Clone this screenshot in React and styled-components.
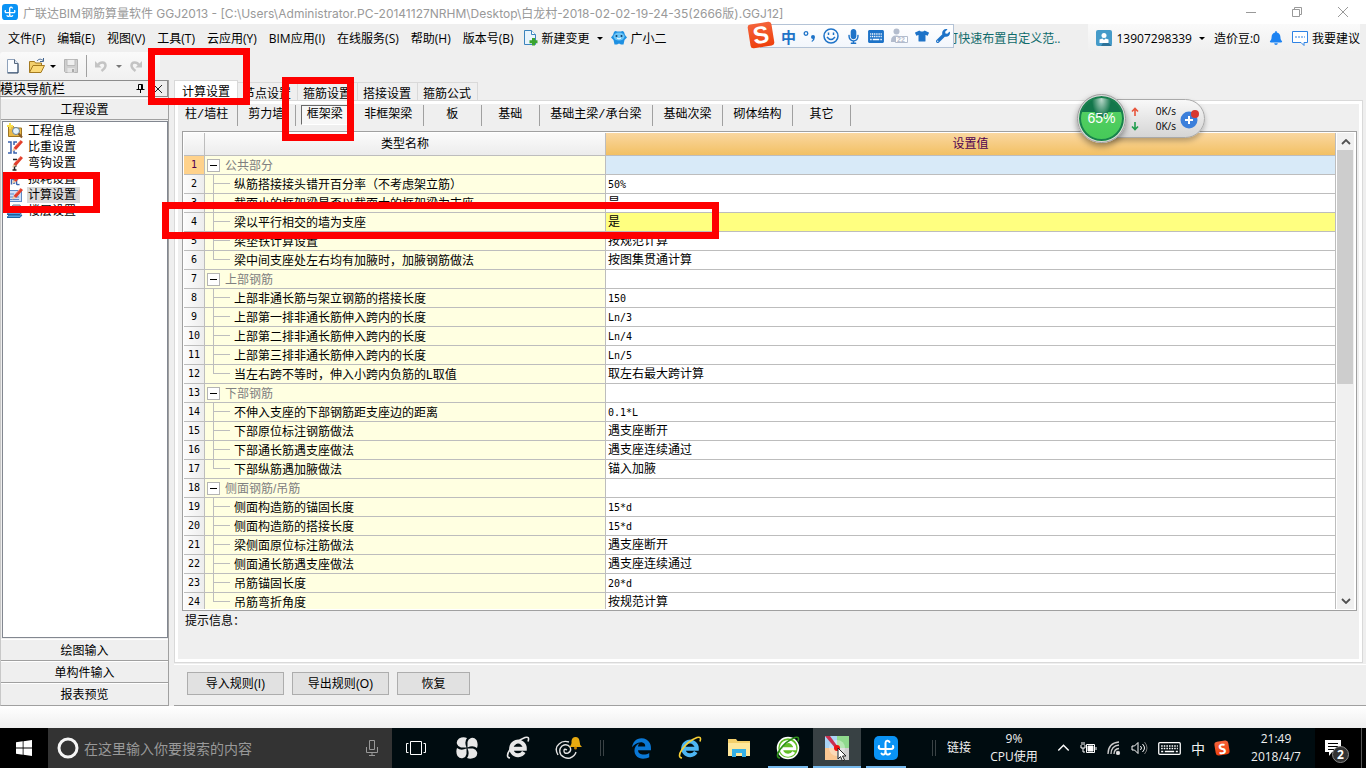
import React, { useState } from 'react';
import styled, { createGlobalStyle, css } from 'styled-components';
import {
    FaBell,
    FaEdgeLegacy,
    FaMicrophone,
    FaTshirt,
    FaWrench,
} from 'react-icons/fa';

const GlobalStyle = createGlobalStyle`
    * {
        box-sizing: border-box;
    }

    body {
        margin: 0;
        font-family: 'Liberation Sans', 'Noto Sans CJK SC', sans-serif;
        font-size: 12px;
        color: #000;
        background: #fff;
    }

    button {
        font: inherit;
        color: inherit;
        padding: 0;
        border: none;
        background: none;
        white-space: nowrap;
    }

    svg {
        display: block;
        flex: none;
    }
`;

const Desktop = styled.div`
    position: relative;
    display: flex;
    flex-direction: column;
    height: 100vh;
    overflow: hidden;
    background: #efefef;
`;

// Title bar
const TitleBar = styled.header`
    display: flex;
    align-items: center;
    height: 24px;
    padding-left: 2px;
    background: #fff;
    color: #999;
    font-family: Inter, 'Noto Sans CJK SC', sans-serif;
`;

const Title = styled.h1`
    flex: 1;
    margin: 0 0 0 5px;
    font-size: 12px;
    font-weight: normal;
    white-space: nowrap;
`;

const WindowButton = styled.button`
    display: flex;
    align-items: center;
    justify-content: center;
    width: 46px;
    height: 20px;
`;

// Menu bar
const MenuBar = styled.nav`
    display: flex;
    align-items: center;
    height: 28px;
    padding: 0 6px 0 8px;
    font-family: 'Open Sans', 'Noto Sans CJK SC', sans-serif;
`;

const MenuItems = styled.div`
    display: flex;
    align-items: center;
    gap: ${props => props.$gap}px;
    margin-right: 9px;
`;

const MenuItem = styled.button`
    display: flex;
    align-items: center;
    gap: 4px;
`;

const Caret = styled.span`
    width: 0;
    height: 0;
    margin-left: ${props => props.$gap || 0}px;
    border: 3px solid transparent;
    border-top-color: ${props => props.$color || '#000'};
    border-bottom: none;
`;

const Notice = styled.a`
    margin-left: auto;
    margin-right: 28px;
    color: #0f6b6b;
    text-decoration: none;
    white-space: nowrap;
`;

const AccountArea = styled.div`
    display: flex;
    align-items: center;
    gap: 9px;
    height: 28px;
    padding-left: 8px;
    background: linear-gradient(#fafafa, #efefef);
`;

// Toolbar
const Toolbar = styled.div`
    display: flex;
    align-items: center;
    width: 160px;
    height: 28px;
    padding-left: 5px;
    border-radius: 3px;
    background: linear-gradient(#fafafa, #f0f0f0);
`;

const ToolButton = styled.button`
    display: flex;
    align-items: center;
    margin-right: 7px;
`;

const ToolDivider = styled.span`
    width: 1px;
    height: 22px;
    margin-right: 7px;
    background: #a0a0a0;
`;

// Left navigation
const Body = styled.div`
    display: flex;
    flex: 1;
    min-height: 0;
`;

const Sidebar = styled.aside`
    display: flex;
    flex-direction: column;
    width: 169px;
    margin-right: 5px;
    border: 1px solid #a0a0a0;
    border-top: none;
    border-left-color: #c8c8c8;
`;

const SidebarHead = styled.div`
    display: flex;
    align-items: center;
    height: 17px;
    margin: 0 0 1px -1px;
    border: 1px solid #8c8c8c;
    border-left: none;
    font-size: 13px;
    line-height: 14px;

    span {
        flex: 1;
    }
`;

const HeadButton = styled.button`
    display: flex;
    align-items: center;
    justify-content: center;
    width: 18px;
    height: 15px;
`;

const SectionButton = styled.button`
    height: 22px;
    padding-bottom: 2px;
    border-top: 1px solid #fff;
    border-bottom: 1px solid #a0a0a0;
    text-align: center;

    &:last-child {
        border-bottom: none;
    }
`;

const NavList = styled.ul`
    flex: 1;
    min-height: 0;
    margin: 1px 0 1px 1px;
    padding: 1px 4px;
    border: 1px solid #828790;
    background: #fff;
    list-style: none;
`;

const NavItem = styled.li`
    height: 16px;

    button {
        display: flex;
        align-items: center;
        gap: 4px;
        height: 16px;
    }

    span {
        padding: 0 4px 0 1px;
        line-height: 16px;
        background: ${props => (props.$active ? '#d9d9d9' : 'transparent')};
    }
`;

// Settings area
const Main = styled.main`
    display: flex;
    flex: 1;
    flex-direction: column;
    min-width: 0;
`;

const TabStrip = styled.div`
    display: flex;
    align-items: flex-end;
    height: 20px;
`;

const Tab = styled.button`
    height: 18px;
    padding: 1px 6px 0 5px;
    border: 1px solid #d9d9d9;
    border-bottom: none;
    border-left-width: ${props => (props.$active ? '1px' : '0')};

    ${props => props.$active && css`
        height: 20px;
        padding: 0 7px;
        background: #fff;
    `}
`;

const TabPage = styled.section`
    display: flex;
    flex: 1;
    flex-direction: column;
    min-height: 0;
    margin-right: 3px;
    padding: 1px 2px 0 7px;
    border: 1px solid #d9d9d9;
    box-shadow: inset 0 0 0 3px #fff;
`;

const SubTabs = styled.div`
    display: flex;
    align-items: center;
    height: 29px;
    margin-left: -3px;
    padding-bottom: 3px;
    font-family: 'Liberation Mono', 'Noto Sans CJK SC', monospace;
`;

const SubTab = styled.button`
    min-width: 58px;
    height: 21px;
    padding: 0 11px 0 10px;
    border-right: 1px solid #a0a0a0;

    &:first-child {
        padding: 0 9px 0 6px;
    }

    span {
        display: inline-block;
        line-height: 18px;
    }

    ${props => props.$active && css`
        padding: 0 5px;

        span {
            width: 47px;
            border: 1px solid #fff;
            border-top-color: #696969;
            border-left-color: #696969;
            background: #f7f7f7;
        }
    `}
`;

const GridFrame = styled.div`
    display: flex;
    flex: 1;
    min-height: 0;
    margin-right: 3px;
    padding: 1px;
    border: 1px solid #a0a0a0;
    background: #fff;
`;

const GridView = styled.div`
    flex: 1;
    min-width: 0;
    overflow: hidden;
`;

const Grid = styled.table`
    width: 100%;
    table-layout: fixed;
    border-collapse: separate;
    border-spacing: 0;
    line-height: 18px;

    th,
    td {
        padding: 0;
        border-right: 1px solid #bdbdbd;
        border-bottom: 1px solid #bdbdbd;
        font-weight: normal;
        white-space: nowrap;
    }

    thead th {
        height: 23px;
        background: linear-gradient(#fbfbfb, #ececec);
    }

    thead th:last-child {
        background: linear-gradient(#fad7a0, #f2c063);
        color: #500050;
    }
`;

const latinFont = css`
    font-family: 'DejaVu Sans Mono', monospace;
    font-size: 10px;
`;

const RowNumber = styled.th`
    ${latinFont}
    height: 19px;
    background: ${props => (props.$active ? '#ffd28b' : 'linear-gradient(90deg, #fcfcfc, #ededed)')};
    color: ${props => (props.$active ? '#500050' : '#000')};
`;

const NameCell = styled.td`
    background: #ffffe1;

    div {
        display: flex;
        height: 18px;
        line-height: 20px;
        color: ${props => (props.$group ? '#808080' : '#000')};
    }
`;

const Toggle = styled.button`
    display: flex;
    align-items: center;
    justify-content: center;
    align-self: center;
    width: 13px;
    height: 13px;
    margin: 0 5px 0 2px;
    border: 1px solid #b4b4b4;
    background: #fff;

    &::before {
        content: '';
        width: 7px;
        height: 1px;
        background: #000;
    }
`;

const Branch = styled.span`
    width: 17px;
    height: 9px;
    margin: 0 4px 0 8px;
    border-left: 1px solid #bdbdbd;
    border-bottom: 1px solid #bdbdbd;

    ${props => !props.$last && css`
        height: 18px;
        border-bottom: none;
        background: linear-gradient(#bdbdbd, #bdbdbd) 0 8px / 100% 1px no-repeat;
    `}
`;

const ValueCell = styled.td`
    && {
        padding: 1px 0 0 2px;
    }
    ${props => props.$latin && latinFont}
    line-height: 17px;
    vertical-align: top;
    background: ${props => props.$fill || '#fff'};
`;

const ScrollBar = styled.div`
    display: flex;
    flex-direction: column;
    width: 17px;
    margin: 0 1px;
    background: #f0f0f0;
`;

const ScrollButton = styled.button`
    display: flex;
    align-items: center;
    justify-content: center;
    height: 17px;
`;

const ScrollTrack = styled.div`
    flex: 1;

    &::before {
        content: '';
        display: block;
        height: 53%;
        margin-right: 1px;
        background: #cdcdcd;
    }
`;

const Hint = styled.p`
    height: 51px;
    margin: 0;
    padding: 1px 3px;
    line-height: 18px;
`;

const Actions = styled.div`
    display: flex;
    align-items: center;
    gap: 8px;
    height: 42px;
    margin-top: 1px;
    padding: 0 13px 4px;
    border-top: 1px solid #fff;
    border-bottom: 1px solid #a0a0a0;
`;

const ActionButton = styled.button`
    width: ${props => (props.$wide ? 97 : 73)}px;
    height: 23px;
    padding-bottom: 2px;
    border: 1px solid #adadad;
    background: #e1e1e1;
`;

const BottomGap = styled.div`
    height: 22px;
    background: linear-gradient(#fff, #efefef);
`;

// Floating things over the window
const Mark = styled.div`
    position: absolute;
    left: ${props => props.$x}px;
    top: ${props => props.$y}px;
    width: ${props => props.$w}px;
    height: ${props => props.$h}px;
    border: 7px solid #fe0000;
    pointer-events: none;
`;

const ImeBar = styled.div`
    position: absolute;
    top: 24px;
    left: 760px;
    display: flex;
    align-items: center;
    gap: 7px;
    width: 194px;
    height: 24px;
    padding-left: 20px;
    border: 1px solid #b4c3d6;
    background: linear-gradient(#fff, #f2f6fc);
    color: #1e73c8;

    b {
        font-size: 15px;
    }
`;

const SogouMark = styled.span`
    display: flex;
    align-items: center;
    justify-content: center;
    width: ${props => props.$size}px;
    height: ${props => props.$size}px;
    border-radius: 3px;
    background: linear-gradient(#f4633a, #ee3f0c);
    color: #fff;
    font-size: ${props => props.$size}px;
    font-weight: bold;
    rotate: -9deg;
`;

const ImeLogo = styled.div`
    position: absolute;
    top: 23px;
    left: 749px;
`;

const SpeedBall = styled.div`
    position: absolute;
    top: 93px;
    right: 161px;
    display: flex;
    align-items: center;
    width: 128px;
    height: 50px;
`;

const Ball = styled.div`
    display: flex;
    z-index: 1;
    align-items: center;
    justify-content: center;
    width: 49px;
    height: 49px;
    border: 2px solid #dcdcdc;
    border-radius: 50%;
    outline: 1px solid #9c9c9c;
    outline-offset: -1px;
    background: radial-gradient(ellipse at 50% 8%, #b9d8ca 0, #13764b 30%, transparent 31%),
        linear-gradient(#13764b 35%, #52cf62 36%, #45c958);
    box-shadow: inset 0 0 0 2px #19804e, 0 3px 6px rgba(0, 0, 0, 0.4);
    color: #fff;
    font-size: 14px;
`;

const SpeedPanel = styled.div`
    display: flex;
    flex: 1;
    align-items: center;
    height: 39px;
    margin-left: -20px;
    padding: 2px 4px 0 24px;
    border: 1px solid #a9a9a9;
    border-radius: 0 20px 20px 0;
    background: linear-gradient(#f8f8f8, #d5d5d5);
    box-shadow: 0 3px 5px rgba(0, 0, 0, 0.25);
    font-family: 'Open Sans', sans-serif;
    font-size: 10px;
    line-height: 15px;
    text-align: right;

    span {
        flex: 1;
        margin-right: 4px;
    }
`;

const SpeedArrows = styled.div`
    display: flex;
    flex-direction: column;
    gap: 6px;
`;

// Taskbar
const Taskbar = styled.footer`
    display: flex;
    align-items: center;
    height: 40px;
    background: #000c10;
    color: #f0f0f0;
    font-family: 'Open Sans', 'Noto Sans CJK SC', sans-serif;
`;

const StartButton = styled.button`
    display: flex;
    align-items: center;
    justify-content: center;
    width: 48px;
    height: 40px;
    background: #000;
`;

const Search = styled.label`
    display: flex;
    align-items: center;
    width: 344px;
    height: 40px;
    padding: 0 13px 0 8px;
    background: #333;

    input {
        flex: 1;
        min-width: 0;
        padding: 0 0 0 4px;
        border: none;
        outline: none;
        background: none;
        color: #fff;
        font: inherit;
        font-size: 14px;
    }

    input::placeholder {
        color: #999;
        opacity: 1;
    }
`;

const TaskGroup = styled.div`
    display: flex;
    gap: ${props => props.$gap}px;
`;

const TaskButton = styled.button`
    display: flex;
    align-items: center;
    justify-content: center;
    width: 48px;
    height: 40px;

    ${props => props.$open && css`
        background: linear-gradient(#76b9ed, #76b9ed) 50% 100% / 40px 2px no-repeat;
    `}

    ${props => props.$active && css`
        background: linear-gradient(#76b9ed, #76b9ed) 0 100% / 100% 2px no-repeat #384144;
    `}
`;

const Grip = styled.span`
    width: 4px;
    height: 16px;
    margin: 0 ${props => props.$after}px 0 ${props => props.$before}px;
    border: 1px solid #3a4245;
    border-width: 0 1px;
`;

const Tray = styled.div`
    display: flex;
    align-items: center;
    margin-left: auto;
    height: 40px;
`;

const TrayText = styled.div`
    width: ${props => props.$width}px;
    line-height: 18px;
    text-align: center;
    white-space: nowrap;
`;

const TrayIcons = styled.div`
    display: flex;
    align-items: center;
    gap: 10px;
    margin: 0 11px 0 3px;

    b {
        font-size: 14px;
        font-weight: normal;
    }
`;

const Notification = styled.button`
    position: relative;
    display: flex;
    align-items: flex-start;
    width: 46px;
    height: 40px;
    margin-left: 3px;
    padding: 12px 0 0 10px;
    background: #000;

    span {
        position: absolute;
        top: 18px;
        left: 17px;
        width: 17px;
        height: 17px;
        border: 1px solid #888;
        border-radius: 50%;
        background: #333;
        color: #fff;
        font-weight: bold;
        line-height: 15px;
    }
`;

const ShowDesktop = styled.button`
    width: 5px;
    height: 40px;
    border-left: 1px solid #555;
    background: #000;
`;

const menus = ['文件(F)', '编辑(E)', '视图(V)', '工具(T)', '云应用(Y)', 'BIM应用(I)', '在线服务(S)', '帮助(H)', '版本号(B)'];

const navItems = ['工程信息', '比重设置', '弯钩设置', '损耗设置', '计算设置', '楼层设置'];

const tabs = ['计算设置', '节点设置', '箍筋设置', '搭接设置', '箍筋公式'];

const subTabs = ['柱/墙柱', '剪力墙', '框架梁', '非框架梁', '板', '基础', '基础主梁/承台梁', '基础次梁', '砌体结构', '其它'];

const groups = [
    {
        name: '公共部分',
        items: [
            ['纵筋搭接接头错开百分率（不考虑架立筋）', '50%'],
            ['截面小的框架梁是否以截面大的框架梁为支座', '是'],
            ['梁以平行相交的墙为支座', '是', '#ffff80'],
            ['梁垫铁计算设置', '按规范计算'],
            ['梁中间支座处左右均有加腋时，加腋钢筋做法', '按图集贯通计算'],
        ],
    },
    {
        name: '上部钢筋',
        items: [
            ['上部非通长筋与架立钢筋的搭接长度', '150'],
            ['上部第一排非通长筋伸入跨内的长度', 'Ln/3'],
            ['上部第二排非通长筋伸入跨内的长度', 'Ln/4'],
            ['上部第三排非通长筋伸入跨内的长度', 'Ln/5'],
            ['当左右跨不等时，伸入小跨内负筋的L取值', '取左右最大跨计算'],
        ],
    },
    {
        name: '下部钢筋',
        items: [
            ['不伸入支座的下部钢筋距支座边的距离', '0.1*L'],
            ['下部原位标注钢筋做法', '遇支座断开'],
            ['下部通长筋遇支座做法', '遇支座连续通过'],
            ['下部纵筋遇加腋做法', '锚入加腋'],
        ],
    },
    {
        name: '侧面钢筋/吊筋',
        items: [
            ['侧面构造筋的锚固长度', '15*d'],
            ['侧面构造筋的搭接长度', '15*d'],
            ['梁侧面原位标注筋做法', '遇支座断开'],
            ['侧面通长筋遇支座做法', '遇支座连续通过'],
            ['吊筋锚固长度', '20*d'],
            ['吊筋弯折角度', '按规范计算'],
        ],
    },
];

// Flatten the groups so each grid row carries its running number
const rows = groups.flatMap(group => [
    { name: group.name, value: '', group: true },
    ...group.items.map(([name, value, fill], i) => ({
        name,
        value,
        fill,
        last: i === group.items.length - 1,
    })),
]);

const AppLogo = ({ size }) => (
    <svg width={size} height={size} viewBox="0 0 24 24">
        <rect width="24" height="24" rx="5" fill="#0a93f5" />
        <g fill="none" stroke="#fff" strokeWidth="2" strokeLinecap="round">
            <path d="M15.500 6c-1-1.800-4-1.600-4 1v9c0 2.500-2.500 3.500-4 1.500" />
            <path d="M5 10c-.8 1.600 0 3 2 3h10c2 0 2.800-1.400 2-3M11.500 16c0 2.500 3 3.500 4.500 1.500" />
        </g>
    </svg>
);

const NewDocIcon = () => (
    <svg width="16" height="18" viewBox="0 0 16 18">
        <path d="M2.500 2.500h7l3.500 4v9H2.500z" fill="#fbfdff" stroke="#8fa2bb" />
        <path d="M13 6.500v9.500H2.500" fill="none" stroke="#2f4763" />
        <path d="M9.500 2.500v4H13" fill="#dbe7f5" stroke="#55677e" />
    </svg>
);

const OpenIcon = () => (
    <svg width="18" height="18" viewBox="0 0 18 18">
        <path d="M1.500 15.500v-11h5l1 1.500h6v3" fill="#f3cf6c" stroke="#a47a20" />
        <path d="M1.500 15.500L5 8.500h11.500l-3.500 7z" fill="#fbd977" stroke="#a47a20" />
        <path d="M9 4c1.500-2 4-2.500 6-.5M15.500 1v3.500H12" fill="none" stroke="#43658f" />
    </svg>
);

const SaveIcon = () => (
    <svg width="16" height="16" viewBox="0 0 16 16">
        <path d="M1.500 1.500h13v13h-12l-1-1z" fill="#cfcfcf" stroke="#b3b3b3" />
        <path d="M4 1.500h8v6H4z" fill="#efefef" stroke="#bbb" />
        <path d="M4.500 10h7v4.500h-7z" fill="#e6e6e6" />
        <path d="M9 11h2v3H9z" fill="#aaa" />
    </svg>
);

const UndoIcon = ({ flip }) => (
    <svg width="14" height="14" viewBox="0 0 14 14">
        <g transform={flip ? 'translate(14 0) scale(-1 1)' : undefined}>
            <path d="M4 6c2-3.500 7.500-3.500 7.500.5 0 2.500-2 4-4 5.500" fill="none" stroke="#c4c4c4" strokeWidth="2.500" />
            <path d="M1 2v6.500h6.500z" fill="#c4c4c4" />
        </g>
    </svg>
);

const pencil = (
    <>
        <path d="M6.500 9l7-8L16 3 9 11z" fill="#e23e2c" />
        <path d="M9 6.500l4.500-5" stroke="#f7a08f" />
        <path d="M6.500 9l-1.500 3.500L9 11z" fill="#f1c9a0" />
    </>
);

const NavIcon = ({ index }) => (
    <svg width="16" height="16" viewBox="0 0 16 16">
        {index === 0 && (
            <>
                <path d="M1.500 13.500v-10h5l1 1.500h7v8.500z" fill="#eab948" stroke="#9c7424" />
                <circle cx="9" cy="8" r="3.500" fill="#e5f3fb" stroke="#66829a" />
                <path d="M11.500 10.500l3.500 4" stroke="#875a28" strokeWidth="2" />
                <path d="M3 0v6M0 3h6" stroke="#f9e04e" strokeWidth="2" />
            </>
        )}
        {index === 1 && (
            <>
                <path d="M1 3h3v11H1M10 3H7v3M7 11v3h3" fill="none" stroke="#3a62ad" strokeWidth="1.500" />
                {pencil}
            </>
        )}
        {index === 2 && (
            <>
                <path d="M6 4.500h4M7.500 9v6M5.500 15h4M6 11h3.500" stroke="#222" strokeWidth="1.500" />
                {pencil}
            </>
        )}
        {index === 3 && (
            <>
                <path d="M4.500 13.500V8H7v5M9.500 7v5.500q0 1.500 3 1" fill="none" stroke="#3a62ad" strokeWidth="1.500" />
                {pencil}
            </>
        )}
        {index === 4 && (
            <>
                <rect x=".5" y="3.500" width="14" height="11" fill="#cfe0f7" stroke="#5e8ac6" />
                <path d="M2 7h5M2 10h10M2 12.500h10" stroke="#5e8ac6" />
                {pencil}
            </>
        )}
        {index === 5 && (
            <>
                <path d="M3 6l3-4h7l2 4z" fill="#b9c9d6" stroke="#6f8798" />
                <path d="M2 6h13l-2 3H0zM2 9h13l-2 2.500H0zM2 12h13l-2 2.500H0z" fill="#56a5e4" stroke="#1e639f" />
            </>
        )}
    </svg>
);

const ChevronIcon = ({ down, color = '#505050', width = 10, stroke = 1.8 }) => (
    <svg width={width} height={width * 0.6} viewBox="0 0 10 6">
        <path d={down ? 'M1 1l4 4 4-4' : 'M1 5l4-4 4 4'} fill="none" stroke={color} strokeWidth={stroke} />
    </svg>
);

const PersonIcon = () => (
    <svg width="16" height="16" viewBox="0 0 16 16">
        <rect width="16" height="16" rx="2" fill="#459bc9" />
        <path d="M9 10l7 6H5z" fill="#2e7399" />
        <circle cx="8" cy="5.500" r="2.500" fill="#fff" />
        <path d="M3.500 9.500l3-1 1.500 1.500 1.500-1.500 3 1V13h-9z" fill="#fff" />
    </svg>
);

const CommentIcon = () => (
    <svg width="16" height="16" viewBox="0 0 16 16">
        <path d="M.5 1.500h15v11H12v3l-3-3H.5z" fill="#fff" stroke="#2f83e4" />
        <path d="M3 7h10" stroke="#2f83e4" strokeDasharray="2 1" />
    </svg>
);

const ChangeIcon = () => (
    <svg width="15" height="16" viewBox="0 0 15 16">
        <path d="M1.500.5h7l4 4v10h-11z" fill="#e9f4fd" stroke="#3c84bd" />
        <path d="M8.500.5v4h4" fill="#fff" stroke="#3c84bd" />
        <path d="M10.500 8v7.500M6.500 11.700h8" stroke="#3aa52e" strokeWidth="3" />
    </svg>
);

const MascotIcon = () => (
    <svg width="16" height="16" viewBox="0 0 16 16">
        <path d="M3 2q1.500-1.500 3-.5h4q1.500-1 3 .5l1 3 2 2.500L13.500 10l-1 4.500H10L8 13.500l-2 1H3.500l-1-4.500L0 7.500 2 5z" fill="#1e90e2" />
        <ellipse cx="8" cy="6.500" rx="5.500" ry="4" fill="#6bc5f7" />
        <circle cx="5.500" cy="6" r="1" fill="#153d66" />
        <circle cx="10.500" cy="6" r="1" fill="#153d66" />
        <path d="M6 8q2 2 4 0" fill="none" stroke="#fff" />
    </svg>
);

const SmileIcon = () => (
    <svg width="16" height="16" viewBox="0 0 16 16" fill="none" stroke="#1e73c8" strokeWidth="1.500">
        <circle cx="8" cy="8" r="7" />
        <path d="M5.500 4.500V7M10.500 4.500V7M4 9q4 5 8 0" />
    </svg>
);

const PunctuationIcon = () => (
    <svg width="13" height="14" viewBox="0 0 13 14">
        <circle cx="3" cy="4.500" r="1.800" fill="none" stroke="#1e73c8" strokeWidth="1.300" />
        <path d="M8 8a2 2 0 1 1 4 0q0 3-3 5l-.5-1Q10 11 10 10 8 10 8 8z" fill="#1e73c8" />
    </svg>
);

const KeyboardIcon = ({ color, width, keys }) => (
    <svg width={width} height="13" viewBox="0 0 22 13" preserveAspectRatio="none">
        <rect x=".7" y=".7" width="20.600" height="11.600" rx="1" fill={keys ? color : 'none'} stroke={color} strokeWidth="1.200" />
        <g stroke={keys || color} strokeWidth="1.300">
            <path d="M3 4h16M3 6.500h16" strokeDasharray="1.500 1" />
            <path d="M3 9.500h2M6.500 9.500h9M17 9.500h2" />
        </g>
    </svg>
);

const UserCardIcon = () => (
    <svg width="17" height="16" viewBox="0 0 17 16" fill="#b3bccd">
        <circle cx="5.500" cy="3.500" r="3" />
        <path d="M0 13q0-6 6-5.500l4 1V14H0z" />
        <path d="M4.500 8.500h12v6h-12z" fill="#fff" stroke="#b3bccd" />
        <text x="6" y="14" fontSize="7" fontWeight="bold">22</text>
    </svg>
);

const WindowsIcon = () => (
    <svg width="16" height="16" viewBox="0 0 16 16" fill="#fff">
        <path d="M0 2.200L6.700 1.300v6.200H0zM7.500 1.200L16 0v7.500H7.500zM0 8.400h6.700v6.300L0 13.800zM7.500 8.400H16V16l-8.500-1.200z" />
    </svg>
);

const TaskViewIcon = () => (
    <svg width="20" height="16" viewBox="0 0 20 16" fill="none" stroke="#fff">
        <path d="M4.500 1.500h11v13h-11zM2.500 3.500h-2v9h2M17.500 3.500h2v9h-2" />
    </svg>
);

const PetalIcon = () => (
    <svg width="22" height="22" viewBox="0 0 22 22" fill="#e8e8e8">
        {[0, 90, 180, 270].map(turn => (
            <g key={turn} transform={`rotate(${turn} 11 11)`}>
                <path d="M10.500 10.500Q8 5 11 1q-4-1.500-8 .5Q0 4 1 7q1 3 4 3.500z" />
            </g>
        ))}
    </svg>
);

const SpiralIcon = () => (
    <svg width="28" height="24" viewBox="0 0 28 24">
        <g fill="none" stroke="#e4e4e4" strokeWidth="1.400">
            <path d="M12 14q-3-2-3 1t4 2q4-2 2-6-3-4-8-1-4 4-1 9 4 4 9 3 5-2 6-6" />
            <path d="M3 19Q-1 12 4 8 8 4 14 6" />
        </g>
        <path d="M14 11q3-2 2.500-6 .5-4 4-4t4 4q0 4 2.500 6z" fill="#e7aa10" />
        <circle cx="20.500" cy="12" r="1.500" fill="#c98300" />
    </svg>
);

const BrowserIcon = ({ color, ring, swoosh }) => (
    <svg width="26" height="26" viewBox="0 0 26 26">
        {ring && <circle cx="13" cy="13" r="10.500" fill="#62be27" stroke="#fff" strokeWidth="1.500" />}
        <path
            d="M8 13.800h11.800A6.800 6.800 0 1 0 18.800 17"
            fill="none"
            stroke={color}
            strokeWidth={ring ? 3 : 4}
        />
        <path d="M5 23Q0 22 5 14.500 11 6 20 2.500q5-1.500 3 4" fill="none" stroke={swoosh} strokeWidth="1.600" />
    </svg>
);

const FolderIcon = () => (
    <svg width="22" height="20" viewBox="0 0 22 20">
        <path d="M0 1h8l1.500 2H22v15H0z" fill="#f4cf6b" />
        <path d="M0 5h22v13H0z" fill="#ffe79b" />
        <path d="M4 11h14v8h-4v-4H8v4H4z" fill="#35b0e6" />
    </svg>
);

const MapIcon = () => (
    <svg width="26" height="26" viewBox="0 0 26 26">
        <path d="M1 1h12v12H1z" fill="#a9d3f5" />
        <path d="M13 1h12v12H13z" fill="#8fd98d" />
        <path d="M1 13h12v12H1z" fill="#fbc792" />
        <path d="M13 13h12v12H13z" fill="#cfcfcf" />
        <circle cx="13" cy="13" r="8" fill="#fff" opacity=".35" />
        <path d="M1 1h5l8 11-2 2z" fill="#c9304f" />
        <circle cx="13" cy="13" r="3" fill="#ee1111" />
        <path d="M14 13v11l2.500-2.500 2 4.500 2-1-2-4H22z" fill="#fff" stroke="#222" />
    </svg>
);

const Arrow = ({ color, down }) => (
    <svg width="8" height="9" viewBox="0 0 8 9">
        <path d={down ? 'M4 0v7M1 4.500l3 3 3-3' : 'M4 9V2M1 4.500l3-3 3 3'} fill="none" stroke={color} strokeWidth="1.600" />
    </svg>
);

const App = () => {
    const [nav, setNav] = useState('计算设置');
    const [tab, setTab] = useState('计算设置');
    const [subTab, setSubTab] = useState('框架梁');

    return (
        <Desktop>
            <GlobalStyle />
            <TitleBar>
                <AppLogo size={16} />
                <Title>{'广联达BIM钢筋算量软件 GGJ2013 - [C:\\Users\\Administrator.PC-20141127NRHM\\Desktop\\白龙村-2018-02-02-19-24-35(2666版).GGJ12]'}</Title>
                <WindowButton aria-label="最小化">
                    <svg width="10" height="10"><path d="M0 5.500h10" stroke="#999" /></svg>
                </WindowButton>
                <WindowButton aria-label="还原">
                    <svg width="10" height="10" fill="none" stroke="#999"><path d="M.5 2.500h7v7h-7zM2.500 2.500v-2h7v7h-2" /></svg>
                </WindowButton>
                <WindowButton aria-label="关闭">
                    <svg width="10" height="10"><path d="M0 0l10 10M10 0L0 10" stroke="#999" /></svg>
                </WindowButton>
            </TitleBar>

            <MenuBar>
                <MenuItems $gap={12}>
                    {menus.map(menu => <MenuItem key={menu}>{menu}</MenuItem>)}
                </MenuItems>
                <MenuItems $gap={8}>
                    <MenuItem>
                        <ChangeIcon />
                        新建变更
                        <Caret $gap={3} />
                    </MenuItem>
                    <MenuItem><MascotIcon />广小二</MenuItem>
                </MenuItems>
                <Notice href="#">可快速布置自定义范..</Notice>
                <AccountArea>
                    <MenuItem>
                        <PersonIcon />
                        13907298339
                        <Caret $gap={3} />
                    </MenuItem>
                    <MenuItem>造价豆:0</MenuItem>
                    <MenuItem aria-label="消息"><FaBell size={14} color="#1d83f2" /></MenuItem>
                    <MenuItem><CommentIcon />我要建议</MenuItem>
                </AccountArea>
            </MenuBar>

            <Toolbar>
                <ToolButton aria-label="新建"><NewDocIcon /></ToolButton>
                <ToolButton aria-label="打开">
                    <OpenIcon />
                    <Caret $gap={4} />
                </ToolButton>
                <ToolButton aria-label="保存"><SaveIcon /></ToolButton>
                <ToolDivider />
                <ToolButton aria-label="撤销">
                    <UndoIcon />
                    <Caret $gap={8} $color="#777" />
                </ToolButton>
                <ToolButton aria-label="恢复操作"><UndoIcon flip /></ToolButton>
            </Toolbar>

            <Body>
                <Sidebar>
                    <SidebarHead>
                        <span>模块导航栏</span>
                        <HeadButton aria-label="固定">
                            <svg width="9" height="9" stroke="#000" fill="none"><path d="M2.500 5V.5h4V5M5.500 1v4M.5 5.500h8M4.500 6v3" /></svg>
                        </HeadButton>
                        <HeadButton aria-label="关闭导航栏">
                            <svg width="8" height="8" stroke="#222"><path d="M0 0l8 8M8 0L0 8" /></svg>
                        </HeadButton>
                    </SidebarHead>
                    <SectionButton>工程设置</SectionButton>
                    <NavList>
                        {navItems.map((item, i) => (
                            <NavItem key={item} $active={item === nav}>
                                <button onClick={() => setNav(item)}>
                                    <NavIcon index={i} />
                                    <span>{item}</span>
                                </button>
                            </NavItem>
                        ))}
                    </NavList>
                    <SectionButton>绘图输入</SectionButton>
                    <SectionButton>单构件输入</SectionButton>
                    <SectionButton>报表预览</SectionButton>
                </Sidebar>

                <Main>
                    <TabStrip>
                        {tabs.map(item => (
                            <Tab key={item} $active={item === tab} onClick={() => setTab(item)}>{item}</Tab>
                        ))}
                    </TabStrip>
                    <TabPage>
                        <SubTabs>
                            {subTabs.map(item => (
                                <SubTab key={item} $active={item === subTab} onClick={() => setSubTab(item)}>
                                    <span>{item}</span>
                                </SubTab>
                            ))}
                        </SubTabs>
                        <GridFrame>
                            <GridView>
                                <Grid>
                                    <colgroup>
                                        <col width="21" />
                                        <col width="401" />
                                        <col />
                                    </colgroup>
                                    <thead>
                                        <tr>
                                            <th aria-label="序号" />
                                            <th>类型名称</th>
                                            <th>设置值</th>
                                        </tr>
                                    </thead>
                                    <tbody>
                                        {rows.map((row, i) => (
                                            <tr key={i}>
                                                <RowNumber $active={i === 0}>{i + 1}</RowNumber>
                                                <NameCell $group={row.group}>
                                                    <div>
                                                        {row.group ? <Toggle aria-label="折叠" /> : <Branch $last={row.last} />}
                                                        {row.name}
                                                    </div>
                                                </NameCell>
                                                <ValueCell
                                                    $latin={/^[\x20-\x7e]+$/.test(row.value)}
                                                    $fill={i === 0 ? '#d8eaf8' : row.fill}
                                                >
                                                    {row.value}
                                                </ValueCell>
                                            </tr>
                                        ))}
                                    </tbody>
                                </Grid>
                            </GridView>
                            <ScrollBar>
                                <ScrollButton aria-label="向上滚动"><ChevronIcon /></ScrollButton>
                                <ScrollTrack />
                                <ScrollButton aria-label="向下滚动"><ChevronIcon down /></ScrollButton>
                            </ScrollBar>
                        </GridFrame>
                        <Hint>提示信息：</Hint>
                    </TabPage>
                    <Actions>
                        <ActionButton $wide>导入规则(I)</ActionButton>
                        <ActionButton $wide>导出规则(O)</ActionButton>
                        <ActionButton>恢复</ActionButton>
                    </Actions>
                </Main>
            </Body>
            <BottomGap />

            <Taskbar>
                <StartButton aria-label="开始"><WindowsIcon /></StartButton>
                <Search>
                    <svg width="24" height="24"><circle cx="12" cy="12" r="9" fill="none" stroke="#f5f5f5" strokeWidth="3" /></svg>
                    <input aria-label="搜索" placeholder="在这里输入你要搜索的内容" />
                    <svg width="14" height="18" fill="none" stroke="#999"><path d="M4.500 1.500h5v9h-5zM1.500 8v5.500h11V8M7 13.500V17M4 16.500h6" /></svg>
                </Search>
                <TaskGroup $gap={3}>
                    <TaskButton aria-label="任务视图"><TaskViewIcon /></TaskButton>
                    <TaskButton aria-label="助手"><PetalIcon /></TaskButton>
                    <TaskButton aria-label="浏览器"><BrowserIcon color="#e8e8e8" swoosh="#e8e8e8" /></TaskButton>
                    <TaskButton aria-label="提醒"><SpiralIcon /></TaskButton>
                </TaskGroup>
                <Grip $before={7} $after={13} />
                <TaskGroup $gap={1}>
                    <TaskButton aria-label="Edge"><FaEdgeLegacy size={21} color="#0a78d6" /></TaskButton>
                    <TaskButton aria-label="Internet Explorer"><BrowserIcon color="#4db5f2" swoosh="#f7cf35" /></TaskButton>
                    <TaskButton aria-label="文件资源管理器"><FolderIcon /></TaskButton>
                    <TaskButton aria-label="安全浏览器" $open><BrowserIcon color="#fff" ring swoosh="#2c8f18" /></TaskButton>
                    <TaskButton aria-label="地图" $open $active><MapIcon /></TaskButton>
                    <TaskButton aria-label="钢筋算量" $open><AppLogo size={24} /></TaskButton>
                </TaskGroup>
                <Tray>
                    <Grip $before={0} $after={8} />
                    <TrayText $width={30}>链接</TrayText>
                    <TrayText $width={80}>9%<br />CPU使用</TrayText>
                    <TrayIcons>
                        <ChevronIcon color="#fff" width={13} stroke={1.1} />
                        <svg width="17" height="12" fill="none" stroke="#fff"><path d="M1 3v3h4V3M2 0v3M4 0v3M3 6v4h2M6.500 2.500h8v8h-8zM16 5v3" /><path d="M8 4h5v5H8z" fill="#fff" /></svg>
                        <svg width="14" height="14" fill="none" stroke="#ccc" strokeWidth="1.300"><path d="M1 13Q1 2 12 1M4 13Q4 5 12 4M7 13Q7 8 12 7.500" /><circle cx="11" cy="12" r="1.500" fill="#fff" /></svg>
                        <svg width="17" height="14" fill="none" stroke="#fff"><path d="M1 5h2.500L7 1.500v11L3.500 9H1zM9.500 5q2 2 0 4M11.500 3q4 4 0 8" /><path d="M13.500 1q5 6 0 12" stroke="#777" /></svg>
                        <KeyboardIcon color="#fff" width={23} />
                        <b>中</b>
                        <SogouMark $size={14}>S</SogouMark>
                    </TrayIcons>
                    <TrayText $width={72}>21:49<br />2018/4/7</TrayText>
                    <Notification aria-label="通知">
                        <svg width="16" height="16"><path d="M0 0h16v12H7l-3 4v-4H0z" fill="#fff" /><path d="M3 3.500h10M3 6.500h10M3 9.500h6" stroke="#000" /></svg>
                        <span>2</span>
                    </Notification>
                    <ShowDesktop aria-label="显示桌面" />
                </Tray>
            </Taskbar>

            <ImeBar>
                <b>中</b>
                <PunctuationIcon />
                <SmileIcon />
                <FaMicrophone size={15} />
                <KeyboardIcon color="#1e73c8" width={16} keys="#fff" />
                <UserCardIcon />
                <FaTshirt size={14} />
                <FaWrench size={14} />
            </ImeBar>
            <ImeLogo><SogouMark $size={24}>S</SogouMark></ImeLogo>

            <SpeedBall>
                <Ball>65%</Ball>
                <SpeedPanel>
                    <SpeedArrows>
                        <Arrow color="#e8543a" />
                        <Arrow color="#1f9d4c" down />
                    </SpeedArrows>
                    <span>0K/s<br />0K/s</span>
                    <svg width="20" height="20">
                        <circle cx="9" cy="11" r="8.500" fill="#3b7fdb" />
                        <path d="M9 7v8M5 11h8" stroke="#fff" strokeWidth="2" />
                        <circle cx="15" cy="5" r="4" fill="#d8382f" />
                    </svg>
                </SpeedPanel>
            </SpeedBall>

            <Mark $x={148} $y={48} $w={102} $h={57} />
            <Mark $x={282} $y={77} $w={72} $h={64} />
            <Mark $x={3} $y={172} $w={97} $h={41} />
            <Mark $x={162} $y={202} $w={557} $h={37} />
        </Desktop>
    );
};

export default App;
